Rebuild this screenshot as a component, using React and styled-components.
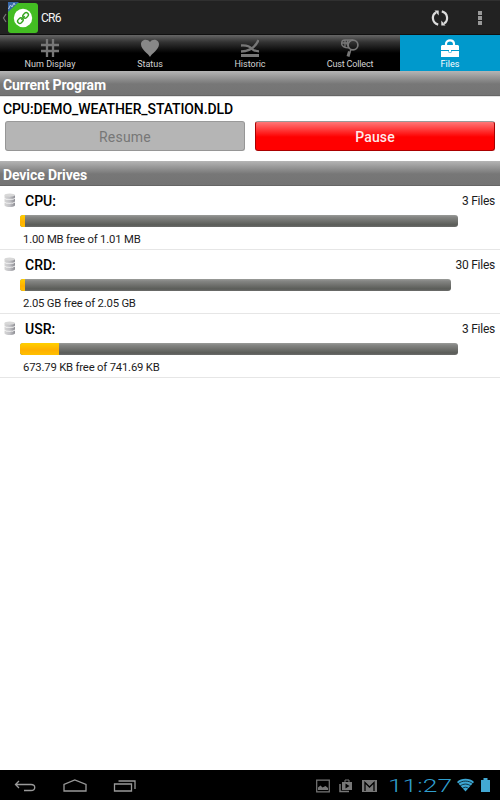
import React from 'react';
import styled, { createGlobalStyle } from 'styled-components';

const GlobalStyle = createGlobalStyle`
  * {
    box-sizing: border-box;
  }

  body {
    margin: 0;
    background: #fff;
    font-family: Roboto, "Liberation Sans", sans-serif;
    color: #000;
  }
`;

const Screen = styled.div`
  display: flex;
  flex-direction: column;
  width: 500px;
  height: 800px;
  overflow: hidden;
  background: #fff;
`;

const ActionBar = styled.header`
  display: flex;
  align-items: center;
  height: 35px;
  flex: none;
  padding-left: 2px;
  background: #222;
  border-top: 1px solid #303030;
  border-bottom: 1px solid #101010;

  svg {
    flex: none;
  }
`;

const Title = styled.h1`
  flex: 1;
  margin: 1px 0 0 2px;
  font-size: 12px;
  line-height: 16px;
  font-weight: 400;
  letter-spacing: -0.7px;
  color: #f4f4f4;
`;

const ActionButton = styled.button`
  display: flex;
  justify-content: center;
  width: 40px;
  padding: 0;
  border: none;
  background: none;
`;

const TabBar = styled.nav`
  display: grid;
  grid-template-columns: repeat(5, 1fr);
  height: 36px;
  flex: none;
`;

const Tab = styled.button`
  display: flex;
  flex-direction: column;
  align-items: center;
  padding: 4px 0 0;
  border: none;
  background: ${props => (props.$active ? '#0099cc' : 'linear-gradient(#666 0, #333 7px, #000 18px)')};
  color: ${props => (props.$active ? '#fff' : '#777')};
`;

const TabLabel = styled.span`
  margin-top: 1px;
  font-family: Roboto, sans-serif;
  font-size: 9px;
  line-height: 11px;
  letter-spacing: ${props => props.$spacing || '0'};
  white-space: nowrap;
  color: ${props => (props.$active ? '#fff' : '#d4d4d4')};
`;

const SectionHeader = styled.h2`
  height: 25px;
  flex: none;
  margin: 0;
  padding-left: 3px;
  font-size: 14px;
  line-height: 28px;
  font-weight: 700;
  letter-spacing: ${props => props.$spacing || '0'};
  color: #fff;
  background: linear-gradient(#b5b5b5 0, #777 13px, #747474 100%);
  border-bottom: 1px solid #666;
`;

const Program = styled.section`
  height: 65px;
  flex: none;
  padding: 4px 5px 0;
  border-top: 1px solid #e2e2e2;
`;

const ProgramName = styled.div`
  margin-left: -2px;
  height: 20px;
  font-size: 14px;
  line-height: 17px;
  font-weight: 500;
  letter-spacing: -0.1px;
  white-space: nowrap;
`;

const ButtonRow = styled.div`
  display: grid;
  grid-template-columns: 1fr 1fr;
  gap: 10px;
`;

const ProgramButton = styled.button`
  height: 30px;
  padding: 1px 0 0;
  border: 1px solid ${props => (props.$stop ? '#a00' : '#969696')};
  border-top-color: #999;
  border-radius: 3px;
  font-family: Roboto, sans-serif;
  font-size: 14px;
  line-height: 28px;
  letter-spacing: ${props => (props.$stop ? '0.15px' : '0.2px')};
  font-weight: ${props => (props.$stop ? 500 : 400)};
  color: ${props => (props.$stop ? '#ffe9e9' : '#777')};
  background: ${props => (props.$stop ? 'linear-gradient(#ff7777 0, #f00 15px)' : '#b5b5b5')};
`;

const DriveList = styled.ul`
  flex: 1;
  margin: 0;
  padding: 0;
  list-style: none;
`;

const DriveItem = styled.li`
  height: 64px;
  padding: 7px 5px 0 3px;
  border-bottom: 1px solid #e6e6e6;
`;

const DriveTop = styled.div`
  display: flex;
  align-items: flex-start;
  height: 22px;
`;

const DriveName = styled.span`
  flex: 1;
  margin-left: 8px;
  font-size: 14px;
  line-height: 17px;
  font-weight: 500;
`;

const FileCount = styled.span`
  font-size: 12px;
  line-height: 17px;
  letter-spacing: -0.25px;
  color: #1c1c1c;
`;

const Bar = styled.div`
  width: ${props => props.$width}px;
  height: 12px;
  margin-left: 17px;
  border-radius: 3px;
  overflow: hidden;
  background: linear-gradient(#9b9d9a 0, #858684 2px, #5a5c58 10px, #6c6d6b 12px);
`;

const Used = styled.div`
  height: 12px;
  background: linear-gradient(#ffd000, #ffb000 7px, #ffc000);
`;

const FreeSpace = styled.div`
  margin: 6px 0 0 20px;
  font-size: 11.3px;
  line-height: 14px;
  letter-spacing: ${props => props.$spacing};
  color: #1c1c1c;
`;

const SystemBar = styled.footer`
  display: flex;
  align-items: center;
  justify-content: space-between;
  height: 30px;
  flex: none;
  padding: 2px 10px 0 14px;
  background: #000;
`;

const NavKeys = styled.div`
  display: flex;
  gap: 25px;
`;

const StatusArea = styled.div`
  display: flex;
  align-items: center;
`;

const Notices = styled.div`
  display: flex;
  gap: 9px;
  margin-right: 12px;
`;

function AppLogo() {
  return (
    <svg width="37" height="34" viewBox="0 0 37 34">
      <path d="M4 13 1.5 17 4 21" fill="none" stroke="#777" strokeWidth="1.2" />
      <rect x="6" y="2" width="30" height="30" rx="3" fill="#43bd22" />
      <path d="M6 1h11L6 11z" fill="#3768a8" />
      <path d="M6.500 8l2-4 1.500 2 2-4 1 2" fill="none" stroke="#b5c8e2" strokeWidth="1" />
      <circle cx="21" cy="17" r="9.2" fill="#fff" />
      <g fill="none" stroke="#35a41e" strokeWidth="1.4" transform="rotate(-45 21 17)">
        <rect x="14.300" y="14.800" width="6" height="4.400" rx="2.200" />
        <rect x="21.700" y="14.800" width="6" height="4.400" rx="2.200" />
        <path d="M18.500 17h5" />
      </g>
    </svg>
  );
}

function RefreshIcon() {
  return (
    <svg width="18" height="18" viewBox="0 0 18 18">
      <g fill="none" stroke="#ddd" strokeWidth="2.2">
        <path d="M7.200 15.600C.8 14 .4 6 5 3.500" />
        <path d="M10.800 2.400C17.200 4 17.600 12 13 14.500" />
      </g>
      <path d="M3.500 1.500H7.700V6.500zM14.500 16.500H10.300V11.500z" fill="#ddd" />
    </svg>
  );
}

function OverflowIcon() {
  return (
    <svg width="4" height="16" viewBox="0 0 4 16" fill="#999">
      <path d="M0 1h4v4H0zM0 6h4v4H0zM0 11h4v4H0z" />
    </svg>
  );
}

function GridIcon() {
  return (
    <svg width="18" height="19" viewBox="0 0 18 19">
      <path d="M6 0v18M12 0v18M0 6h18M0 12h18" stroke="currentColor" strokeWidth="2.300" />
    </svg>
  );
}

function HeartIcon() {
  return (
    <svg width="18" height="19" viewBox="0 0 18 19">
      <path d="M9 18C7.500 14.500 0 10.800 0 5.200 0 .5 6.500-.7 9 3c2.500-3.700 9-2.500 9 2.200C18 10.800 10.500 14.500 9 18z" fill="#888" />
    </svg>
  );
}

function ChartIcon() {
  return (
    <svg width="18" height="19" viewBox="0 0 18 19">
      <path d="M0 15h18v3H0z" fill="currentColor" />
      <g fill="none" stroke="currentColor" strokeWidth="2.300">
        <path d="M0 12.500C8 12.500 14 9 17.500 1" />
        <path d="M0 6.500c6-.5 9 1 11 3.500 2 2 4 2.300 7 2.300" />
      </g>
    </svg>
  );
}

function CollectIcon() {
  return (
    <svg width="18" height="19" viewBox="0 0 18 19" fill="none" stroke="currentColor">
      <circle cx="12" cy="6" r="4.900" strokeWidth="1.700" />
      <path d="M12 1H4C1 1 .6 2.500.6 4.500c0 3 3.400 4.500 7.400 4.300M1 4h7M4 1v7M7 1 6 5l2 4" strokeWidth="1.300" />
      <path d="M10 10.500 9 13" strokeWidth="1.500" />
      <path d="M8.500 12.500 7 17.500" strokeWidth="3" />
    </svg>
  );
}

function BriefcaseIcon() {
  return (
    <svg width="18" height="19" viewBox="0 0 18 19">
      <path d="M5 7V5C5 .2 13 .2 13 5V7" fill="none" stroke="#fff" strokeWidth="2.200" />
      <path d="M1 6h16l1 1v4H0V7zM0 12h7.500v1.500h3V12H18v6H0z" fill="#fff" />
      <path d="M8 11h2v2H8z" fill="#fff" />
    </svg>
  );
}

function DriveIcon() {
  return (
    <svg width="14" height="15" viewBox="0 0 14 15">
      <defs>
        <linearGradient id="disk">
          <stop offset="0" stopColor="#d5d5d5" />
          <stop offset="0.500" stopColor="#c2c2c6" />
          <stop offset="1" stopColor="#8d8d93" />
        </linearGradient>
      </defs>
      <g fill="url(#disk)">
        <path d="M1.500 9.500c2 1.600 8 1.600 10.500 0v3c-2 2-8.500 2-10.500 0z" />
        <path d="M1.500 5.800c2 1.600 8 1.600 10.500 0v3c-2 2-8.500 2-10.500 0z" />
        <path d="M1.500 2c2 1.600 8 1.600 10.500 0v3c-2 2-8.500 2-10.500 0z" />
      </g>
      <ellipse cx="6.700" cy="2" rx="5.200" ry="1.600" fill="#d8d8d8" />
      <path d="M1.500 5.200c2 1.600 8 1.600 10.500 0M1.500 9c2 1.600 8 1.600 10.500 0" stroke="#eee" fill="none" strokeWidth=".6" />
    </svg>
  );
}

function BackKey() {
  return (
    <svg width="23" height="14" viewBox="0 0 23 14" fill="none" stroke="#999" strokeWidth="1.300">
      <path d="M5 2 1.500 5.500 5 9M1.500 5.500H17c5 0 5 6 0 6h-7" />
    </svg>
  );
}

function HomeKey() {
  return (
    <svg width="26" height="14" viewBox="0 0 26 14" fill="none" stroke="#999" strokeWidth="1.300">
      <path d="M2 12V5.500L12.800 1 24 5.500V12z" />
    </svg>
  );
}

function RecentKey() {
  return (
    <svg width="24" height="14" viewBox="0 0 24 14" fill="none" stroke="#999" strokeWidth="1.300">
      <path d="M1.500 5h17v7h-17zM5.500 2h16.500v8" />
    </svg>
  );
}

function PictureNotice() {
  return (
    <svg width="14" height="14" viewBox="0 0 14 14">
      <path d="M.7 1.200h12.600v11.600H.7z" fill="none" stroke="#777" strokeWidth="1.200" />
      <path d="M2 11V8.500l2.500-2 2 2L9.500 7l2.500 2v2z" fill="#777" />
    </svg>
  );
}

function PlayNotice() {
  return (
    <svg width="14" height="14" viewBox="0 0 14 14">
      <path d="M1 5v7.500h9" fill="none" stroke="#777" strokeWidth="1.500" />
      <path d="M6 3V1h4v2" fill="none" stroke="#777" />
      <path d="M3 3h10v8H3z" fill="#777" />
      <path d="m6.500 4.500 4 2.500-4 2.500z" fill="#000" />
    </svg>
  );
}

function MailNotice() {
  return (
    <svg width="15" height="14" viewBox="0 0 15 14">
      <path d="M0 1h15v12H0z" fill="#777" />
      <path d="M3 12V3.500l4.500 4.500L12 3.500V12" fill="none" stroke="#000" strokeWidth="1.300" />
    </svg>
  );
}

function Clock({ time }) {
  return (
    <svg width="65" height="20" viewBox="0 0 65 20">
      <text
        x="-1"
        y="16"
        textLength="64"
        lengthAdjust="spacingAndGlyphs"
        fontFamily="Roboto, sans-serif"
        fontWeight="300"
        fontSize="18"
        fill="#309fce"
      >
        {time}
      </text>
    </svg>
  );
}

function WifiIcon() {
  return (
    <svg width="17" height="14" viewBox="0 0 17 14">
      <path d="M0 4C4-.2 13-.2 17 4L8.500 13.500z" fill="#3ca7d3" />
      <path d="M1 5.800c4-3.600 11-3.600 15 0M3 8.200c3-2.800 8-2.800 11 0M5.300 10.500c2-1.700 4.400-1.700 6.400 0" fill="none" stroke="#000" strokeWidth=".7" />
    </svg>
  );
}

function BatteryIcon() {
  return (
    <svg width="9" height="14" viewBox="0 0 9 14" fill="#42a8d3">
      <path d="M2.500 0h4v2H9v12H0V2h2.500z" />
    </svg>
  );
}

const StatusGlyphs = styled.div`
  display: flex;
  gap: 7px;
  margin-left: 3px;

  svg {
    margin-top: -2px;
  }
`;

const tabs = [
  { label: 'Num Display', Icon: GridIcon, spacing: '0.05px' },
  { label: 'Status', Icon: HeartIcon },
  { label: 'Historic', Icon: ChartIcon },
  { label: 'Cust Collect', Icon: CollectIcon, spacing: '-0.15px' },
  { label: 'Files', Icon: BriefcaseIcon, active: true },
];

const drives = [
  { name: 'CPU:', files: 3, free: '1.00 MB free of 1.01 MB', width: 438, used: 1.1, spacing: '-0.19px' },
  { name: 'CRD:', files: 30, free: '2.05 GB free of 2.05 GB', width: 431, used: 1.1, spacing: '-0.21px' },
  { name: 'USR:', files: 3, free: '673.79 KB free of 741.69 KB', width: 438, used: 9, spacing: '-0.19px' },
];

function App() {
  return (
    <Screen>
      <GlobalStyle />
      <ActionBar>
        <AppLogo />
        <Title>CR6</Title>
        <ActionButton aria-label="Refresh"><RefreshIcon /></ActionButton>
        <ActionButton aria-label="More options"><OverflowIcon /></ActionButton>
      </ActionBar>

      <TabBar>
        {tabs.map(({ label, Icon, active, spacing }) => (
          <Tab key={label} $active={active}>
            <Icon />
            <TabLabel $active={active} $spacing={spacing}>{label}</TabLabel>
          </Tab>
        ))}
      </TabBar>

      <SectionHeader $spacing="-0.15px">Current Program</SectionHeader>
      <Program>
        <ProgramName>CPU:DEMO_WEATHER_STATION.DLD</ProgramName>
        <ButtonRow>
          <ProgramButton disabled>Resume</ProgramButton>
          <ProgramButton $stop>Pause</ProgramButton>
        </ButtonRow>
      </Program>

      <SectionHeader $spacing="-0.1px">Device Drives</SectionHeader>
      <DriveList>
        {drives.map(drive => (
          <DriveItem key={drive.name}>
            <DriveTop>
              <DriveIcon />
              <DriveName>{drive.name}</DriveName>
              <FileCount>{drive.files} Files</FileCount>
            </DriveTop>
            <Bar $width={drive.width}>
              <Used style={{ width: `${drive.used}%` }} />
            </Bar>
            <FreeSpace $spacing={drive.spacing}>{drive.free}</FreeSpace>
          </DriveItem>
        ))}
      </DriveList>

      <SystemBar>
        <NavKeys>
          <BackKey />
          <HomeKey />
          <RecentKey />
        </NavKeys>
        <StatusArea>
          <Notices>
            <PictureNotice />
            <PlayNotice />
            <MailNotice />
          </Notices>
          <Clock time="11:27" />
          <StatusGlyphs>
            <WifiIcon />
            <BatteryIcon />
          </StatusGlyphs>
        </StatusArea>
      </SystemBar>
    </Screen>
  );
}

export default App;
